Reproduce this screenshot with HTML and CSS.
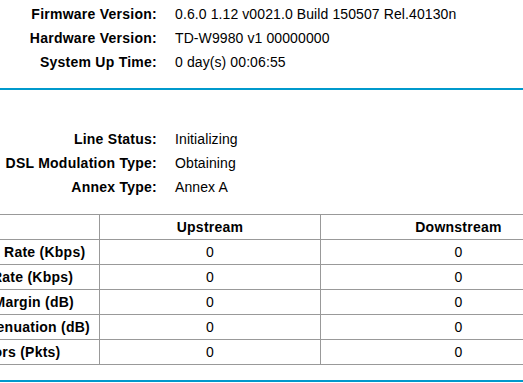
FILE: index.html
```html
<!DOCTYPE html>
<html>
<head lang="en">
    <meta charset="UTF-8">
    <title>Status</title>
    <link rel="stylesheet" href="styles.css">
</head>
<body>
    <div id="viewport">
        <div id="page">
            <!-- 设备信息 -->
            <div class="info first">
                <div class="label">Firmware Version:</div>
                <div class="value">0.6.0 1.12 v0021.0 Build 150507 Rel.40130n</div>
                <div class="label">Hardware Version:</div>
                <div class="value">TD-W9980 v1 00000000</div>
                <div class="label">System Up Time:</div>
                <div class="value">0 day(s) 00:06:55</div>
            </div>
            <div class="line"></div>
            <!-- DSL -->
            <div class="info second">
                <div class="label">Line Status:</div>
                <div class="value">Initializing</div>
                <div class="label">DSL Modulation Type:</div>
                <div class="value">Obtaining</div>
                <div class="label">Annex Type:</div>
                <div class="value">Annex A</div>
            </div>
            <table id="dsl">
                <tr>
                    <th class="c1"></th>
                    <th class="c2">Upstream</th>
                    <th class="c3">Downstream</th>
                </tr>
                <tr><th>Current Rate (Kbps)</th><td>0</td><td>0</td></tr>
                <tr><th>Max Rate (Kbps)</th><td>0</td><td>0</td></tr>
                <tr><th>SNR Margin (dB)</th><td>0</td><td>0</td></tr>
                <tr><th>Line Attenuation (dB)</th><td>0</td><td>0</td></tr>
                <tr><th>Errors (Pkts)</th><td>0</td><td>0</td></tr>
            </table>
            <div class="line"></div>
        </div>
    </div>
</body>
</html>
```

FILE: styles.css
```css
*{
    margin: 0;
    padding: 0;
}
html,body{
    overflow: hidden;
    background: #fff;
}
body{
    font-family: "Liberation Sans", Arial, sans-serif;
    font-size: 14px;
    color: #000;
}
#viewport{
    width: 523px;
    overflow: hidden;
}
#page{
    margin-left: -67px;
    width: 664px;
}
.info{
    display: grid;
    grid-template-columns: 224px 1fr;
    column-gap: 18px;
    line-height: 24px;
}
.info.first{
    padding-top: 2px;
    margin-bottom: 14px;
}
.info.second{
    margin-top: 37px;
    margin-bottom: 15px;
}
.info .label{
    font-weight: bold;
    text-align: right;
    white-space: nowrap;
    letter-spacing: 0.25px;
}
.info .value{
    white-space: nowrap;
    letter-spacing: 0.1px;
}
.line{
    height: 2px;
    background: #0099cc;
}
#dsl{
    width: 664px;
    border-collapse: collapse;
    margin-bottom: 15px;
}
#dsl th,#dsl td{
    border: 1px solid #999;
    height: 24px;
    line-height: 24px;
    text-align: center;
    white-space: nowrap;
}
#dsl th{
    font-weight: bold;
    letter-spacing: 0.25px;
}
#dsl td{
    font-weight: normal;
}
#dsl .c1{
    width: 165px;
}
#dsl .c2{
    width: 220px;
}
```
